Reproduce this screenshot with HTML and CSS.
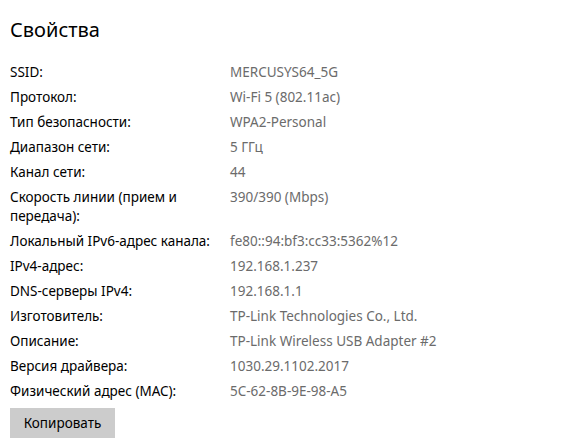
FILE: index.html
```html
<!DOCTYPE html>
<html lang="ru">
<head>
<meta charset="utf-8">
<link rel="stylesheet" href="styles.css">
</head>
<body>
<div class="page">
  <h1 class="title">Свойства</h1>
  <dl class="props">
    <dt>SSID:</dt><dd>MERCUSYS64_5G</dd>
    <dt>Протокол:</dt><dd>Wi-Fi 5 (802.11ac)</dd>
    <dt>Тип безопасности:</dt><dd>WPA2-Personal</dd>
    <dt>Диапазон сети:</dt><dd>5 ГГц</dd>
    <dt>Канал сети:</dt><dd>44</dd>
    <dt>Скорость линии (прием и<br>передача):</dt><dd>390/390 (Mbps)</dd>
    <dt>Локальный IPv6-адрес канала:</dt><dd>fe80::94:bf3:cc33:5362%12</dd>
    <dt>IPv4-адрес:</dt><dd>192.168.1.237</dd>
    <dt>DNS-серверы IPv4:</dt><dd>192.168.1.1</dd>
    <dt>Изготовитель:</dt><dd>TP-Link Technologies Co., Ltd.</dd>
    <dt>Описание:</dt><dd>TP-Link Wireless USB Adapter #2</dd>
    <dt>Версия драйвера:</dt><dd>1030.29.1102.2017</dd>
    <dt>Физический адрес (MAC):</dt><dd>5C-62-8B-9E-98-A5</dd>
  </dl>
  <button class="copy">Копировать</button>
</div>
</body>
</html>
```

FILE: styles.css
```css
html, body {
  margin: 0;
  padding: 0;
  background: #ffffff;
}
body {
  font-family: "Noto Sans", "Open Sans", "Liberation Sans", sans-serif;
  color: #000000;
}
.page {
  padding: 16px 10px 0 10px;
  display: flex;
  flex-direction: column;
  align-items: flex-start;
}
.title {
  margin: 0 0 19px 0;
  font-size: 20px;
  font-weight: 400;
  line-height: 28px;
}
.props {
  margin: 0;
  display: grid;
  grid-template-columns: 200px auto;
  column-gap: 20px;
  row-gap: 6px;
  font-size: 13.5px;
  line-height: 19px;
}
.props dt {
  margin: 0;
  color: #000000;
}
.props dd {
  margin: 0;
  color: #6b6b6b;
  white-space: nowrap;
}
.copy {
  margin-top: 7px;
  width: 105px;
  height: 30px;
  border: none;
  background: #cccccc;
  font-family: inherit;
  font-size: 13.5px;
  color: #000000;
  padding: 0;
}
```
